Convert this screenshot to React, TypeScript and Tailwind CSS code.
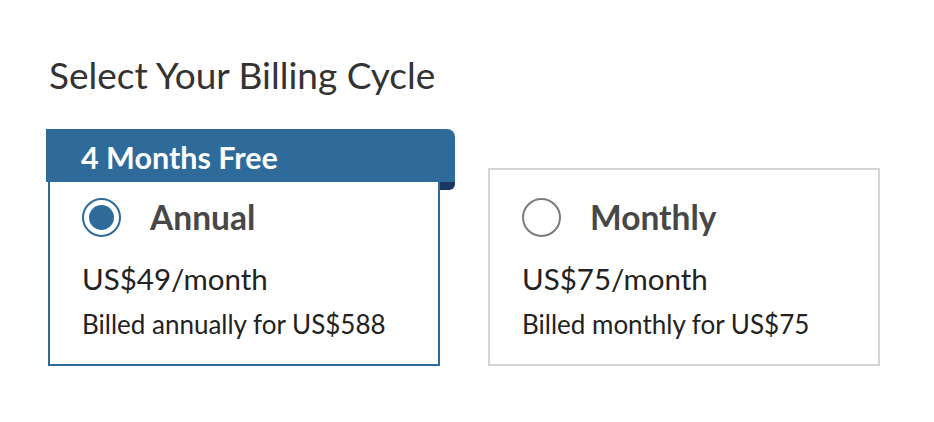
import React from 'react'

interface PlanCardProps {
  label: string
  price: string
  note: string
  selected?: boolean
  badge?: string
}

function Radio({ checked }: { checked?: boolean }) {
  return checked ? (
    <span className="flex h-[39px] w-[39px] shrink-0 items-center justify-center rounded-full border-2 border-[#2e6b9b] bg-white">
      <span className="h-[25px] w-[25px] rounded-full bg-[#2e6b9b]" />
    </span>
  ) : (
    <span className="h-[39px] w-[39px] shrink-0 rounded-full border-2 border-[#7b7b7b] bg-white" />
  )
}

function PlanCard({ label, price, note, selected, badge }: PlanCardProps) {
  return (
    <div
      className={`relative h-[198px] w-[392px] border-2 bg-white pl-[32px] pt-[27px] ${
        selected ? 'border-[#2e6b9b]' : 'border-[#d4d4d4]'
      }`}
    >
      {/* ribbon over the top of the card */}
      {badge && (
        <>
          <div className="absolute left-[-4px] top-[-41px] flex h-[53px] w-[409px] items-center rounded-tr-[8px] bg-[#2e6b9b] pl-[35px] pt-[4px]">
            <span className="text-[30.5px] font-bold leading-none text-white">{badge}</span>
          </div>
          <div className="absolute left-[390px] top-[12px] h-[8px] w-[15px] rounded-br-[6px] bg-[#1b3561]" />
        </>
      )}

      <div className="flex items-center gap-[29px]">
        <Radio checked={selected} />
        <span className="text-[33.5px] font-bold leading-[40px] text-[#474747]">{label}</span>
      </div>
      <div className="mt-[24px] text-[29.5px] leading-[36px] text-[#222]">{price}</div>
      <div className="mt-[12px] text-[26px] leading-[30px] text-[#222]">{note}</div>
    </div>
  )
}

export default function App() {
  return (
    <div
      className="h-[422px] w-[934px] overflow-hidden bg-white pl-[49px] pt-[53px]"
      style={{ fontFamily: 'Lato, "Noto Sans", sans-serif' }}
    >
      <h2 className="text-[37px] leading-[44px] text-[#333]">Select Your Billing Cycle</h2>

      <div className="ml-[-1px] mt-[71px] flex gap-[48px]">
        <PlanCard
          selected
          badge="4 Months Free"
          label="Annual"
          price="US$49/month"
          note="Billed annually for US$588"
        />
        <PlanCard label="Monthly" price="US$75/month" note="Billed monthly for US$75" />
      </div>

      <h2 className="mt-[50px] text-[37px] leading-[44px] text-[#333]">Enter Your Billing Address</h2>
    </div>
  )
}
